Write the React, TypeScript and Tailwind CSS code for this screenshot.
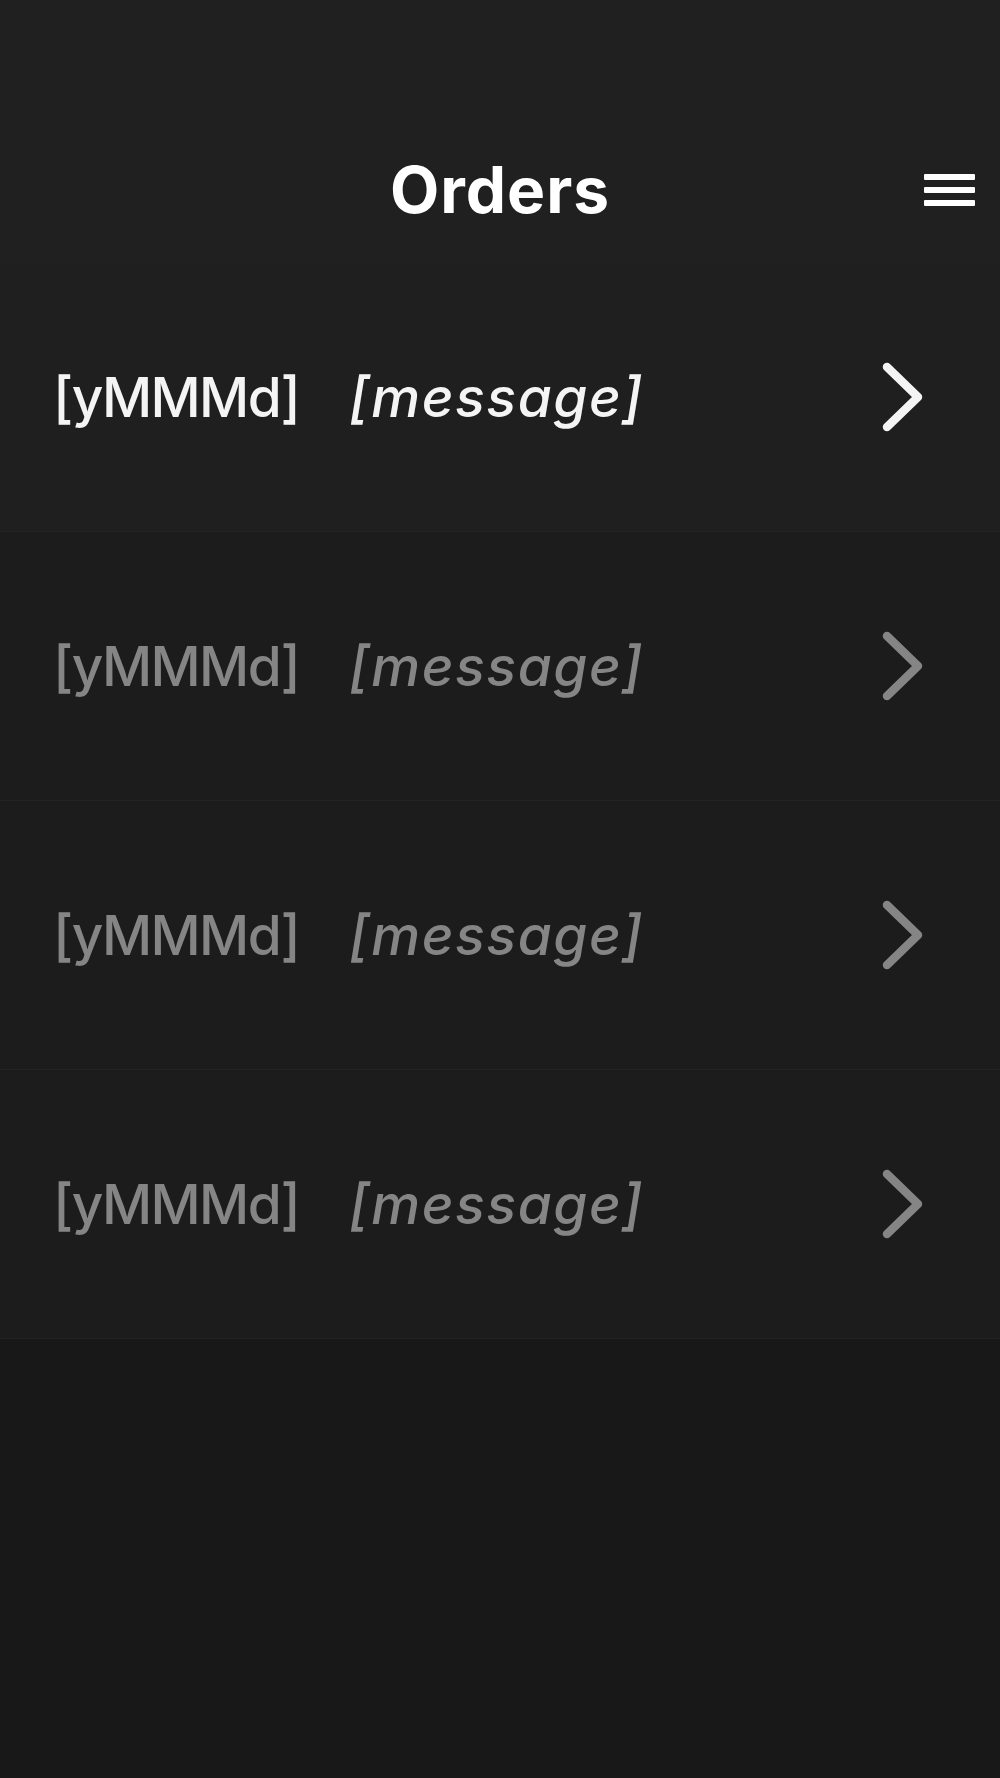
import React from 'react';

const orders = [
  { id: 1, date: '[yMMMd]', message: '[message]', active: true },
  { id: 2, date: '[yMMMd]', message: '[message]', active: false },
  { id: 3, date: '[yMMMd]', message: '[message]', active: false },
  { id: 4, date: '[yMMMd]', message: '[message]', active: false },
];

const Chevron: React.FC<{ className?: string }> = ({ className }) => (
  <svg width="44" height="70" viewBox="0 0 44 70" fill="none" className={className}>
    <polyline points="6,5 37,35 6,65" stroke="currentColor" strokeWidth="8.5" strokeLinecap="round" strokeLinejoin="round" />
  </svg>
);

const OrderRow: React.FC<{ date: string; message: string; active: boolean }> = ({ date, message, active }) => (
  <div
    className={`flex h-[269px] items-center border-b border-[#232323] pl-[53px] pr-[75px] ${
      active ? 'bg-[#1f1f1f] text-[#f4f4f4]' : 'bg-[#1c1c1c] text-[#858585]'
    }`}
  >
    <span className="text-[55px] font-medium leading-none tracking-[-1.6px]">{date}</span>
    <span className="ml-[50px] text-[55px] font-medium italic leading-none tracking-[1.6px]">{message}</span>
    <Chevron className="ml-auto" />
  </div>
);

export default function App() {
  return (
    <div className="flex min-h-[1778px] w-full flex-col bg-[#181818] font-['Inter',sans-serif]">
      <header className="flex h-[263px] flex-col justify-end bg-[#202020] shadow-[0_2px_3px_rgba(0,0,0,0.25)]">
        <div className="mb-[35px] grid h-[76px] grid-cols-[1fr_auto_1fr] items-center">
          <div />
          <h1 className="text-[64px] font-bold leading-none tracking-[1px] text-white">Orders</h1>
          <button className="flex flex-col gap-[7px] justify-self-end pr-[25px]">
            <span className="block h-[6px] w-[51px] rounded-[1px] bg-white" />
            <span className="block h-[6px] w-[51px] rounded-[1px] bg-white" />
            <span className="block h-[6px] w-[51px] rounded-[1px] bg-white" />
          </button>
        </div>
      </header>
      <div className="flex flex-col">
        {orders.map((o) => (
          <OrderRow key={o.id} date={o.date} message={o.message} active={o.active} />
        ))}
      </div>
    </div>
  );
}
